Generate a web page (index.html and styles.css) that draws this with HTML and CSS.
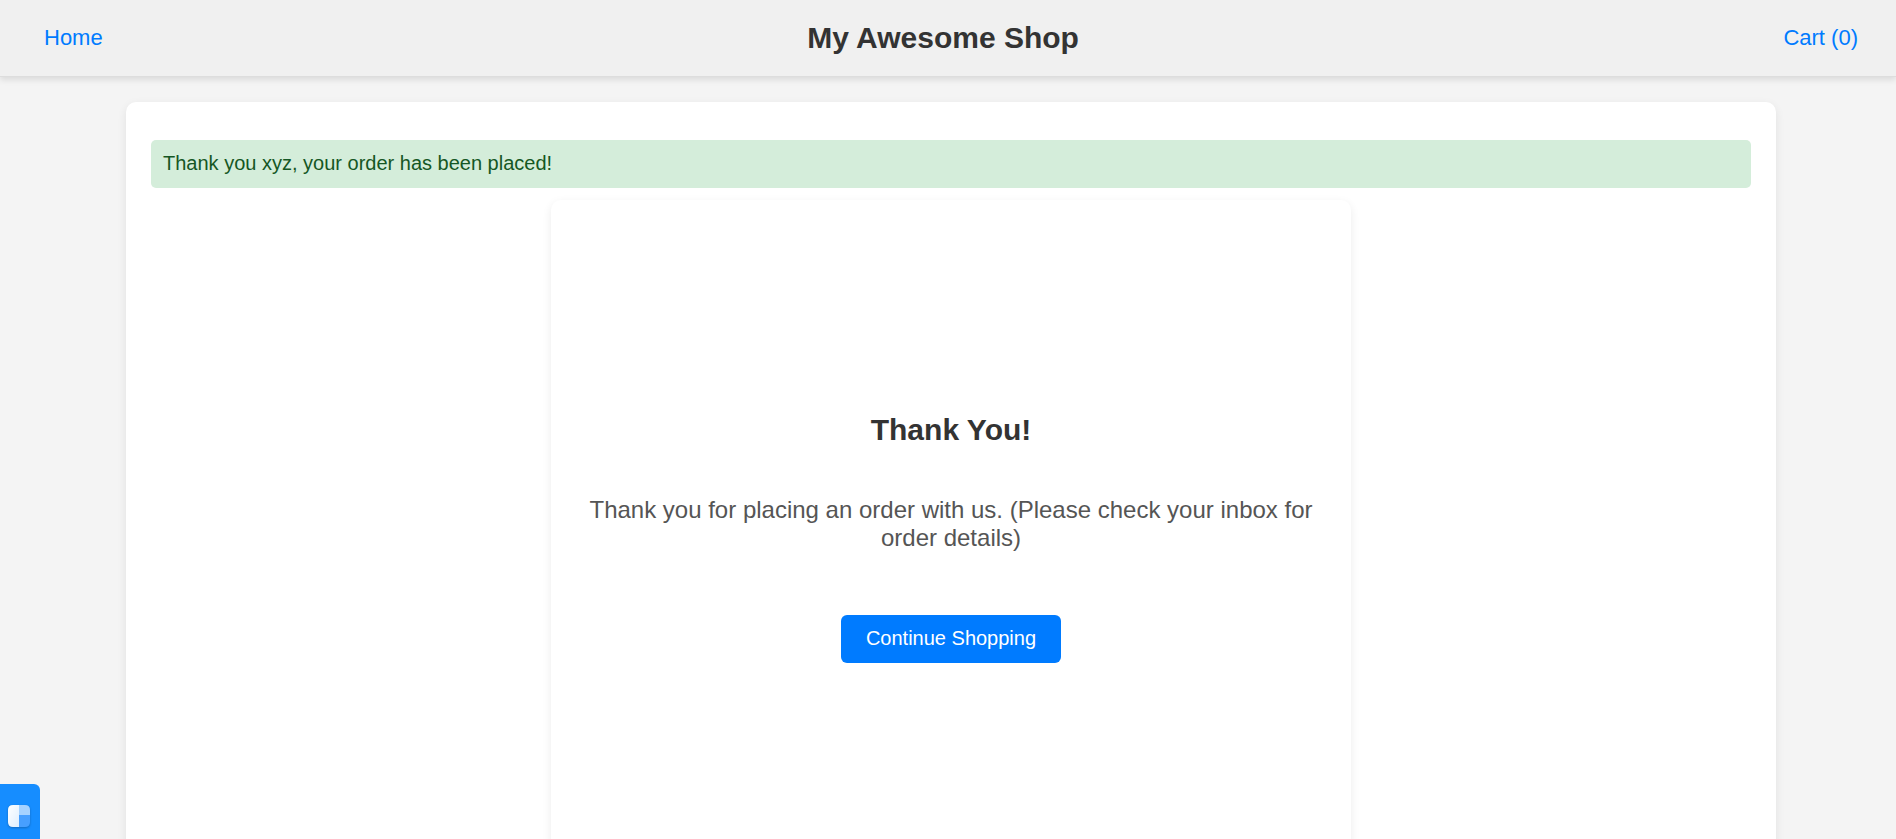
FILE: index.html
```html
<!DOCTYPE html>
<html lang="en">
<head>
<meta charset="utf-8">
<title>My Awesome Shop</title>
<link rel="stylesheet" href="styles.css">
</head>
<body>
<header class="site-header">
  <a class="nav-link" href="#home">Home</a>
  <h1 class="site-title">My Awesome Shop</h1>
  <a class="nav-link" href="#cart">Cart (0)</a>
</header>
<main class="page">
  <div class="container">
    <p class="message" role="status">Thank you xyz, your order has been placed!</p>
    <section class="thanks">
      <h2 class="thanks-title">Thank You!</h2>
      <p class="thanks-text">Thank you for placing an order with us. (Please check your inbox for order details)</p>
      <a class="button" href="#shop">Continue Shopping</a>
    </section>
  </div>
</main>
<button class="side-tab" type="button" aria-label="Open panel">
  <svg class="side-icon" viewBox="0 0 22 22" aria-hidden="true">
    <defs>
      <linearGradient id="pane" x1="0" y1="0" x2="1" y2="1">
        <stop offset="0" stop-color="#fff"/>
        <stop offset="1" stop-color="#deeeff"/>
      </linearGradient>
    </defs>
    <path d="M5 0H11V22H5Q0 22 0 17V5Q0 0 5 0Z" fill="url(#pane)"/>
    <path d="M11 0H17Q22 0 22 5V10H11Z" fill="#a6d2ff"/>
    <path d="M11 10H22V17Q22 22 17 22H11Z" fill="#479fff"/>
  </svg>
</button>
</body>
</html>
```
FILE: styles.css
```css
* {
  box-sizing: border-box;
}

body {
  margin: 0;
  background: #f4f4f4;
  color: #333;
  font-family: "Liberation Sans", Arial, sans-serif;
  font-size: 20px;
}

.site-header {
  display: flex;
  justify-content: space-between;
  align-items: center;
  padding: 21px 38px 21px 44px;
  background: #f0f0f0;
  border-bottom: 1px solid #ddd;
  box-shadow: 0 3px 6px rgba(0, 0, 0, 0.1);
}

.site-title,
.thanks-title {
  margin: 0;
  font-size: 30px;
  line-height: 34px;
}

.nav-link {
  color: #007bff;
  font-size: 22px;
  line-height: 26px;
  text-decoration: none;
}

.page {
  padding: 25px 0 25px 6px;
}

.container {
  width: 100%;
  max-width: 1650px;
  margin: 0 auto;
  padding: 38px 25px 25px;
  background: #fff;
  border-radius: 10px;
  box-shadow: 0 3px 10px rgba(0, 0, 0, 0.08);
}

.message {
  margin: 0 0 12px;
  padding: 12px 12px 14px;
  background: #d4edda;
  color: #155724;
  border-radius: 5px;
  line-height: 22px;
}

.thanks {
  display: flex;
  flex-direction: column;
  align-items: center;
  justify-content: center;
  max-width: 800px;
  min-height: 676px;
  margin: 0 auto;
  padding: 25px;
  border-radius: 10px;
  box-shadow: 0 3px 10px rgba(0, 0, 0, 0.08);
  text-align: center;
}

.thanks-text {
  margin: 49px 0 63px;
  color: #555;
  font-size: 24px;
  line-height: 28px;
}

.button {
  padding: 12px 25px 14px;
  background: #007bff;
  color: #fff;
  border-radius: 6px;
  line-height: 22px;
  text-decoration: none;
}

.side-tab {
  position: fixed;
  left: 0;
  bottom: 0;
  display: flex;
  width: 40px;
  height: 55px;
  padding: 21px 10px 12px 8px;
  border: 0;
  border-radius: 0 6px 0 0;
  background: #168dff;
}

.side-icon {
  width: 22px;
  height: 22px;
  filter: drop-shadow(0 1px 1px rgba(0, 0, 0, 0.25));
}
```
